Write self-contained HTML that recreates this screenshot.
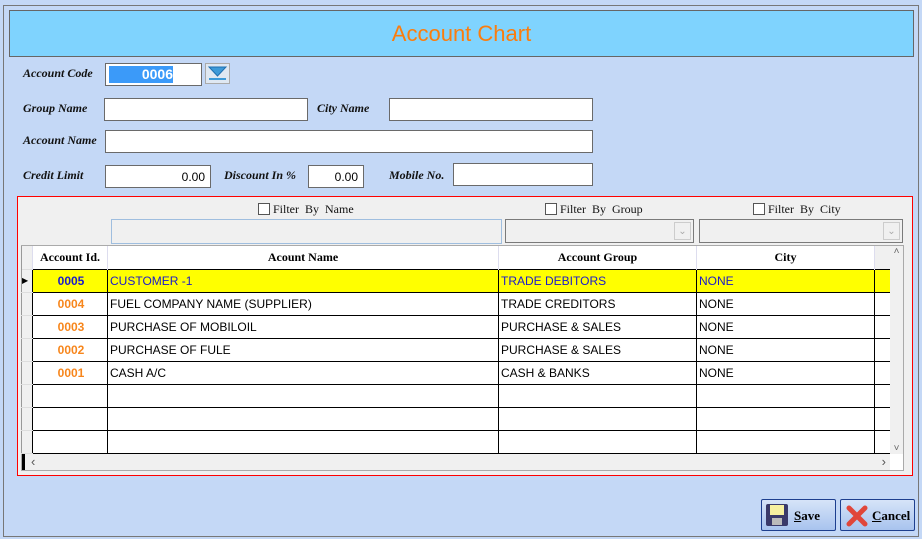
<!DOCTYPE html>
<html><head><style>
*{box-sizing:border-box;margin:0;padding:0}
body{width:922px;height:539px;background:#c4d8f6;position:relative;overflow:hidden;font-family:"Liberation Sans",sans-serif}
.a{position:absolute}
.lbl{position:absolute;font-family:"Liberation Serif",serif;font-weight:bold;font-style:italic;font-size:12px;color:#111}
.in{position:absolute;background:#fff;border:1px solid #6a6a6a;font-size:12px;text-align:right;padding-right:5px;line-height:22px}
.fl{position:absolute;font-family:"Liberation Serif",serif;font-size:12px;color:#111;word-spacing:3px}
.cb{display:inline-block;width:12px;height:12px;border:1px solid #555;background:#fff;vertical-align:-2px;margin-right:3px}
.combo{position:absolute;background:#f0f0f0;border:1px solid #7a7a7a;height:24px}
.combo i{position:absolute;right:2px;top:2px;width:17px;height:18px;border:1px solid #ccc;font-style:normal;color:#aaa;font-size:10px;text-align:center;line-height:18px}
table{border-collapse:collapse;position:absolute;left:21px;top:246px}
td{height:23px;border:1px solid #000;font-size:12px;padding-left:2px;white-space:nowrap}
th{height:23px;font-family:"Liberation Serif",serif;font-size:12px;font-weight:bold;background:#fff;border-right:1px solid #dde;}
td.rh{background:#f0f0f0;border-top:1px solid #ddd;border-bottom:1px solid #ddd;border-left:1px solid #999;padding:0}
td.id{text-align:center;color:#f7861c;font-weight:bold}
tr.sel td{background:#ffff00;color:#1a1acc}
.btn{position:absolute;top:499px;height:32px;border:1px solid #1d3f8f;border-radius:2px;background:linear-gradient(#d6e4f8,#a8c3ee);font-family:"Liberation Serif",serif;font-weight:bold;font-size:13px}
</style></head><body>
<div class="a" style="left:3px;top:5px;width:916px;height:532px;border:1px solid #777"></div>
<div class="a" style="left:9px;top:10px;width:905px;height:47px;background:#7fd3fe;border:1px solid #666;color:#fb7d0d;font-size:22px;text-align:center;line-height:45px">Account Chart</div>

<div class="lbl" style="left:23px;top:66px">Account Code</div>
<div class="in" style="left:105px;top:63px;width:97px;height:23px;padding:2px"><div style="background:#3b9af9;color:#fff;font-weight:bold;font-size:14px;width:64px;height:17px;line-height:17px;text-align:right;margin-left:1px">0006</div></div>
<div class="a" style="left:205px;top:63px;width:25px;height:21px;border:1px solid #aaa;background:#dfe8f2">
<svg width="23" height="19"><path d="M3 3h17l-8.5 9z" fill="#3d9ad8" stroke="#1e6fb0"/><rect x="3" y="14" width="17" height="2" fill="#3d9ad8"/></svg></div>

<div class="lbl" style="left:23px;top:101px">Group Name</div>
<div class="in" style="left:104px;top:98px;width:204px;height:23px"></div>
<div class="lbl" style="left:317px;top:101px">City Name</div>
<div class="in" style="left:389px;top:98px;width:204px;height:23px"></div>
<div class="lbl" style="left:23px;top:133px">Account Name</div>
<div class="in" style="left:105px;top:130px;width:488px;height:23px"></div>
<div class="lbl" style="left:23px;top:168px">Credit Limit</div>
<div class="in" style="left:105px;top:165px;width:106px;height:23px">0.00</div>
<div class="lbl" style="left:224px;top:168px">Discount In %</div>
<div class="in" style="left:308px;top:165px;width:56px;height:23px">0.00</div>
<div class="lbl" style="left:389px;top:168px">Mobile No.</div>
<div class="in" style="left:453px;top:163px;width:140px;height:23px"></div>

<div class="a" style="left:17px;top:196px;width:896px;height:280px;border:1px solid #f00;background:#f0f0f0"></div>
<div class="fl" style="left:258px;top:202px"><span class="cb"></span>Filter By Name</div>
<div class="fl" style="left:545px;top:202px"><span class="cb"></span>Filter By  Group</div>
<div class="fl" style="left:753px;top:202px"><span class="cb"></span>Filter By  City</div>
<div class="a" style="left:111px;top:219px;width:391px;height:25px;border:1px solid #9fbedf;background:#f0f0f0"></div>
<div class="combo" style="left:505px;top:219px;width:189px"><i>&#8964;</i></div>
<div class="combo" style="left:699px;top:219px;width:204px"><i>&#8964;</i></div>

<div class="a" style="left:21px;top:245px;width:883px;height:226px;border:1px solid #aaa;background:#fff"></div>
<table>
<tr><th style="width:11px;background:#f0f0f0;border-left:1px solid #999"></th><th style="width:75px">Account Id.</th><th style="width:391px">Acount Name</th><th style="width:198px">Account Group</th><th style="width:178px">City</th><th style="width:16px;background:#f0f0f0"></th></tr>
<tr class="sel"><td class="rh" style="background:#f0f0f0;font-size:8px;color:#000">&#9654;</td><td class="id" style="color:#1a1acc">0005</td><td>CUSTOMER -1</td><td>TRADE DEBITORS</td><td>NONE</td><td></td></tr>
<tr><td class="rh"></td><td class="id">0004</td><td>FUEL COMPANY NAME (SUPPLIER)</td><td>TRADE CREDITORS</td><td>NONE</td><td></td></tr>
<tr><td class="rh"></td><td class="id">0003</td><td>PURCHASE OF MOBILOIL</td><td>PURCHASE &amp; SALES</td><td>NONE</td><td></td></tr>
<tr><td class="rh"></td><td class="id">0002</td><td>PURCHASE OF FULE</td><td>PURCHASE &amp; SALES</td><td>NONE</td><td></td></tr>
<tr><td class="rh"></td><td class="id">0001</td><td>CASH A/C</td><td>CASH &amp; BANKS</td><td>NONE</td><td></td></tr>
<tr><td class="rh"></td><td></td><td></td><td></td><td></td><td></td></tr>
<tr><td class="rh"></td><td></td><td></td><td></td><td></td><td></td></tr>
<tr><td class="rh"></td><td></td><td></td><td></td><td></td><td></td></tr>
</table>
<div class="a" style="left:890px;top:246px;width:13px;height:208px;background:#f0f0f0;color:#666;font-size:10px;text-align:center">&#708;<div style="position:absolute;bottom:0;width:13px">&#709;</div></div>
<div class="a" style="left:22px;top:454px;width:868px;height:16px;background:#f0f0f0;border-left:3px solid #000;color:#555;font-size:13px;line-height:15px;padding-left:6px">&#8249;<span style="position:absolute;right:4px">&#8250;</span></div>

<div class="btn" style="left:761px;width:75px">
<svg class="a" style="left:3px;top:3px" width="24" height="24"><rect x="1" y="1" width="22" height="22" rx="2" fill="#3a3a6a"/><rect x="5" y="2" width="14" height="10" fill="#f6f0a0"/><rect x="7" y="15" width="10" height="7" fill="#bbb"/></svg>
<span class="a" style="left:32px;top:8px"><u>S</u>ave</span></div>
<div class="btn" style="left:840px;width:75px">
<svg class="a" style="left:5px;top:5px" width="22" height="22"><path d="M3 3L19 19M19 3L3 19" stroke="#e0463a" stroke-width="5" stroke-linecap="round"/></svg>
<span class="a" style="left:31px;top:8px"><u>C</u>ancel</span></div>
</body></html>
